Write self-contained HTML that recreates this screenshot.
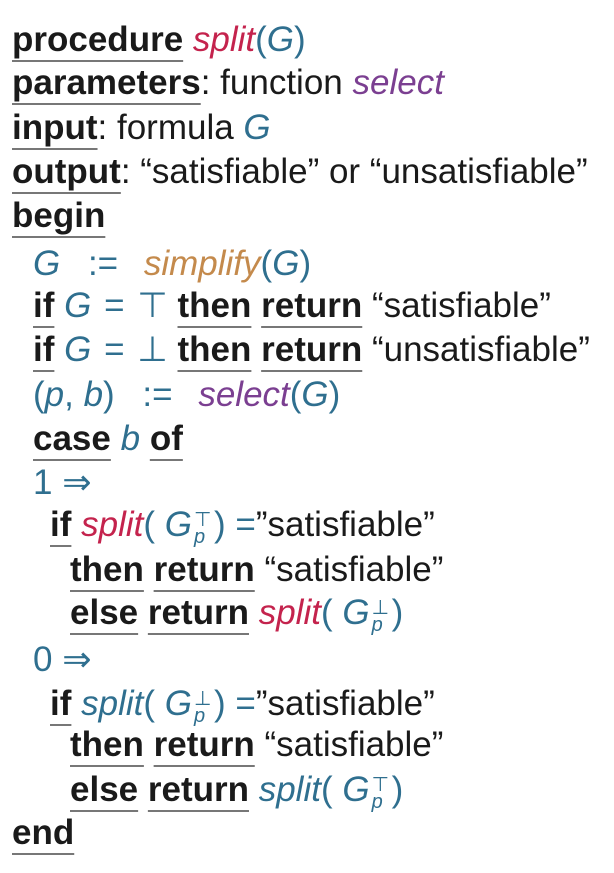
<!DOCTYPE html>
<html><head><meta charset="utf-8"><style>
body{margin:0;width:614px;height:873px;background:#fff;overflow:hidden;font-family:"Liberation Sans",Arial,sans-serif;font-size:35px;color:#1a1a1a}
.l{position:absolute;height:44px;line-height:44px;white-space:nowrap}
b{font-weight:bold;text-decoration:underline;text-decoration-color:#777;text-decoration-thickness:2px;text-underline-offset:9px;text-decoration-skip-ink:none}
.r{color:#c4234d;font-style:italic}
.t{color:#2f6f8f}
.ti{color:#2f6f8f;font-style:italic}
.p{color:#7b3f91;font-style:italic}
.o{color:#c48a4c;font-style:italic}
.sp{display:inline-block;position:relative;width:22px;height:34px;vertical-align:middle}
.sp i{position:absolute;left:2px;font-size:20px;line-height:20px}
.op{margin:0 3px}
.as{margin:0 16px 0 18px}
</style></head><body>
<div class="l" style="left:12px;top:18px"><b>procedure</b> <span class="r">split</span><span class="t">(<i>G</i>)</span></div>
<div class="l" style="left:12px;top:61px"><b>parameters</b>: function <span class="p">select</span></div>
<div class="l" style="left:12px;top:106px"><b>input</b>: formula <span class="ti">G</span></div>
<div class="l" style="left:12px;top:150px"><b>output</b>: “satisfiable” or “unsatisfiable”</div>
<div class="l" style="left:12px;top:194px"><b>begin</b></div>
<div class="l" style="left:33px;top:242px"><span class="ti">G</span><span class="t as">&nbsp;:=&nbsp;</span><span class="o">simplify</span><span class="t">(<i>G</i>)</span></div>
<div class="l" style="left:33px;top:284px"><b>if</b> <span class="t"><i>G</i> <span class="op">=</span> ⊤</span> <b>then</b> <b>return</b> “satisfiable”</div>
<div class="l" style="left:33px;top:328px"><b>if</b> <span class="t"><i>G</i> <span class="op">=</span> ⊥</span> <b>then</b> <b>return</b> “unsatisfiable”</div>
<div class="l" style="left:33px;top:373px"><span class="t">(<i>p</i>, <i>b</i>)<span class="as">&nbsp;:=&nbsp;</span></span><span class="p">select</span><span class="t">(<i>G</i>)</span></div>
<div class="l" style="left:33px;top:417px"><b>case</b> <span class="ti">b</span> <b>of</b></div>
<div class="l" style="left:33px;top:461px"><span class="t">1 ⇒</span></div>
<div class="l" style="left:50px;top:503px"><b>if</b> <span class="r">split</span><span class="t">( <i>G</i><span class="sp"><i style="top:0;font-style:normal">⊤</i><i style="top:17px">p</i></span>) =</span>”satisfiable”</div>
<div class="l" style="left:70px;top:548px"><b>then</b> <b>return</b> “satisfiable”</div>
<div class="l" style="left:70px;top:591px"><b>else</b> <b>return</b> <span class="r">split</span><span class="t">( <i>G</i><span class="sp"><i style="top:0;font-style:normal">⊥</i><i style="top:17px">p</i></span>)</span></div>
<div class="l" style="left:33px;top:638px"><span class="t">0 ⇒</span></div>
<div class="l" style="left:50px;top:682px"><b>if</b> <span class="ti">split</span><span class="t">( <i>G</i><span class="sp"><i style="top:0;font-style:normal">⊥</i><i style="top:17px">p</i></span>) =</span>”satisfiable”</div>
<div class="l" style="left:70px;top:723px"><b>then</b> <b>return</b> “satisfiable”</div>
<div class="l" style="left:70px;top:768px"><b>else</b> <b>return</b> <span class="ti">split</span><span class="t">( <i>G</i><span class="sp"><i style="top:0;font-style:normal">⊤</i><i style="top:17px">p</i></span>)</span></div>
<div class="l" style="left:12px;top:811px"><b>end</b></div>
</body></html>
